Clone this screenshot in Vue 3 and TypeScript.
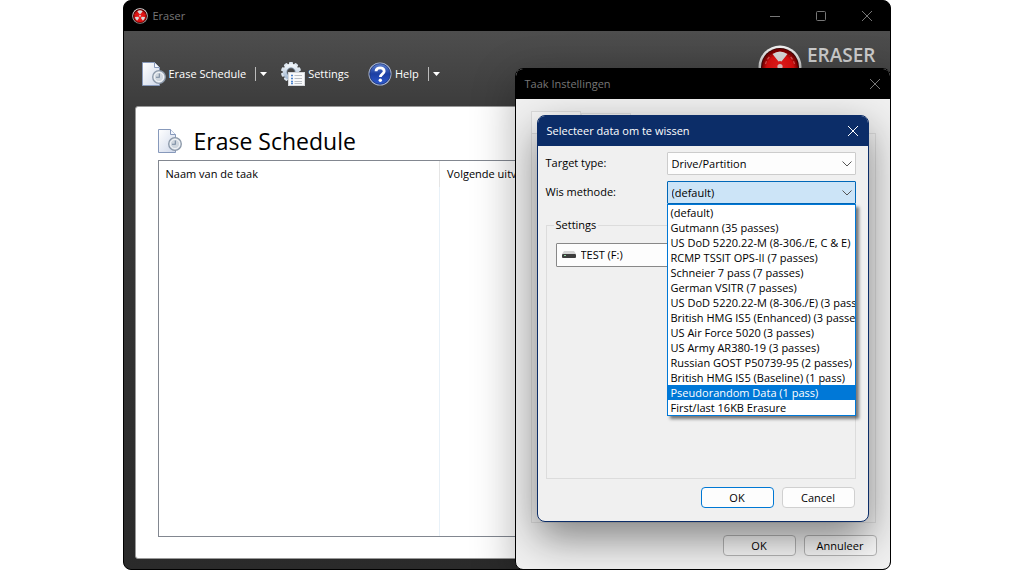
<script setup lang="ts">
import { ref } from 'vue'

const targetType = ref('Drive/Partition')
const method = ref('(default)')
const drive = ref('TEST (F:)')
const highlighted = ref('Pseudorandom Data (1 pass)')

const methods: string[] = [
  '(default)',
  'Gutmann (35 passes)',
  'US DoD 5220.22-M (8-306./E, C & E)',
  'RCMP TSSIT OPS-II (7 passes)',
  'Schneier 7 pass (7 passes)',
  'German VSITR (7 passes)',
  'US DoD 5220.22-M (8-306./E) (3 passes)',
  'British HMG IS5 (Enhanced) (3 passes)',
  'US Air Force 5020 (3 passes)',
  'US Army AR380-19 (3 passes)',
  'Russian GOST P50739-95 (2 passes)',
  'British HMG IS5 (Baseline) (1 pass)',
  'Pseudorandom Data (1 pass)',
  'First/last 16KB Erasure',
]
const teeth: number[] = [0, 36, 72, 108, 144, 180, 216, 252, 288, 324]
</script>

<template>
  <div class="desktop">
    <svg class="defs" width="0" height="0" aria-hidden="true">
      <defs>
        <linearGradient id="paper" x1="0" y1="0" x2="1" y2="1">
          <stop offset="0" stop-color="#ffffff" />
          <stop offset="1" stop-color="#cfd8ea" />
        </linearGradient>
        <linearGradient id="gearFill" x1="0" y1="0" x2="0" y2="1">
          <stop offset="0" stop-color="#eef3f8" />
          <stop offset="1" stop-color="#9fb6d0" />
        </linearGradient>
        <linearGradient id="helpFill" x1="0" y1="0" x2="0" y2="1">
          <stop offset="0" stop-color="#5f82d0" />
          <stop offset="0.5" stop-color="#1c3fa2" />
          <stop offset="1" stop-color="#2d5ad0" />
        </linearGradient>
        <linearGradient id="rim" x1="0" y1="0" x2="0" y2="1">
          <stop offset="0" stop-color="#f4f4f4" />
          <stop offset="1" stop-color="#8c8c8c" />
        </linearGradient>
        <radialGradient id="redFill" cx="0.5" cy="0.55" r="0.5">
          <stop offset="0" stop-color="#f02020" />
          <stop offset="0.75" stop-color="#dc1010" />
          <stop offset="1" stop-color="#7a0000" />
        </radialGradient>
        <symbol id="page-clock" viewBox="0 0 24 24">
          <path d="M0.5 0.5H12.5L17.5 5.5V23.5H0.5Z" fill="url(#paper)" stroke="#8799bb" />
          <path d="M12.5 0.5V5.5H17.5" fill="#f6f9ff" stroke="#8799bb" />
          <circle cx="17" cy="15" r="6.3" fill="#dfe4ea" stroke="#8b98a9" stroke-width="1.3" />
          <circle cx="17" cy="15" r="4.6" fill="#cfd6de" stroke="#f6f8fa" stroke-width="0.8" />
          <path d="M17.3 11.5V15.2H14" fill="none" stroke="#77889f" stroke-width="1.1" />
        </symbol>
        <symbol id="radiation" viewBox="0 0 44 44">
          <circle cx="22" cy="22" r="21.5" fill="url(#rim)" />
          <circle cx="22" cy="22" r="19" fill="#3c0505" />
          <circle cx="22" cy="22" r="18" fill="url(#redFill)" />
          <path d="M20.5 16.5L14.5 9Q22 4 29.5 9L23.5 16.5Q22 15.5 20.5 16.5Z" fill="#d8d8d8" />
          <path d="M27 24L36 25A15 15 0 0 1 30 35L24.5 27.5Z" fill="#d8d8d8" />
          <path d="M17 24L8 25A15 15 0 0 0 14 35L19.5 27.5Z" fill="#d8d8d8" />
          <circle cx="22" cy="21.5" r="2.6" fill="#e4c4c4" />
          <path d="M7.5 19A16 16 0 0 1 13 10.5M36.5 19A16 16 0 0 0 31 10.5" fill="none" stroke="#f48a8a" stroke-width="1.2" opacity="0.6" stroke-dasharray="3 2" />
        </symbol>
      </defs>
    </svg>

    <main class="window">
      <header class="titlebar">
        <svg class="app-icon" aria-hidden="true"><use href="#radiation" /></svg>
        <span class="title">Eraser</span>
        <button class="caption" aria-label="Minimize">
          <svg width="12" height="12"><path d="M1 6.5H11" /></svg>
        </button>
        <button class="caption" aria-label="Maximize">
          <svg width="12" height="12"><rect x="1.5" y="1.5" width="9" height="9" rx="1" /></svg>
        </button>
        <button class="caption" aria-label="Close">
          <svg width="12" height="12"><path d="M1 1L11 11M11 1L1 11" /></svg>
        </button>
      </header>

      <div class="body">
        <nav class="toolbar">
          <div class="tools">
            <button class="tool"><svg class="tool-icon" aria-hidden="true"><use href="#page-clock" /></svg>Erase Schedule</button>
            <button class="drop" aria-label="Erase Schedule menu"><svg width="7" height="4"><path d="M0 0H7L3.5 4Z" /></svg></button>
          </div>
          <div class="tools single">
            <button class="tool">
              <svg class="tool-icon" viewBox="0 0 24 24" aria-hidden="true">
                <rect v-for="a in teeth" :key="a" x="8" y="0" width="4" height="4" rx="1" fill="#d9e3ed" :transform="`rotate(${a} 10 10)`" />
                <circle cx="10" cy="10" r="6.2" fill="none" stroke="url(#gearFill)" stroke-width="4" />
                <circle cx="10" cy="10" r="4.2" fill="none" stroke="#8fa5bd" stroke-width="0.8" />
                <rect x="7.5" y="10.5" width="16" height="13" fill="#f8f9fa" stroke="#d3d6da" />
                <path d="M10 13.5H12M10 16.5H12M10 19.5H12M10 21.5H12" stroke="#4d83cb" stroke-width="1.4" />
                <path d="M13.5 13.5H21M13.5 16.5H21M13.5 19.5H21M13.5 21.5H21" stroke="#b9bec5" />
              </svg>Settings
            </button>
          </div>
          <div class="tools">
            <button class="tool">
              <svg class="tool-icon" viewBox="0 0 24 24" aria-hidden="true">
                <circle cx="12" cy="12" r="11.5" fill="#aebbd6" />
                <circle cx="12" cy="12" r="10.3" fill="url(#helpFill)" stroke="#193277" stroke-width="0.8" />
                <path d="M8 9.2C8 4.8 16.2 4.8 16.2 9.2C16.2 12 12.3 12.2 12.3 15" fill="none" stroke="#fff" stroke-width="2.8" />
                <circle cx="12.3" cy="18.2" r="1.7" fill="#fff" />
              </svg>Help
            </button>
            <button class="drop" aria-label="Help menu"><svg width="7" height="4"><path d="M0 0H7L3.5 4Z" /></svg></button>
          </div>
          <div class="brand">
            <svg class="brand-icon" aria-hidden="true"><use href="#radiation" /></svg>
            <div class="brand-text"><strong>ERASER</strong><small>6.2</small></div>
          </div>
        </nav>

        <section class="panel">
          <h1><svg class="tool-icon" aria-hidden="true"><use href="#page-clock" /></svg>Erase Schedule</h1>
          <div class="list">
            <table>
              <thead>
                <tr><th scope="col">Naam van de taak</th><th scope="col">Volgende uitvoering</th></tr>
              </thead>
              <tbody>
                <tr><td></td><td></td></tr>
              </tbody>
            </table>
          </div>
        </section>
      </div>

      <section class="task-dialog" role="dialog" aria-labelledby="task-title">
        <header class="titlebar">
          <span id="task-title" class="title">Taak Instellingen</span>
          <button class="caption narrow" aria-label="Close">
            <svg width="12" height="12"><path d="M1 1L11 11M11 1L1 11" /></svg>
          </button>
        </header>
        <div class="task-body">
          <div class="tabs"><span class="tab active"></span><span class="tab"></span></div>
          <div class="tab-page"></div>
          <footer class="actions">
            <button class="btn">OK</button>
            <button class="btn">Annuleer</button>
          </footer>
        </div>

        <form class="data-dialog" role="dialog" aria-labelledby="data-title" @submit.prevent>
          <header class="titlebar">
            <span id="data-title" class="title">Selecteer data om te wissen</span>
            <button type="button" class="caption narrow" aria-label="Close">
              <svg width="12" height="12"><path d="M1 1L11 11M11 1L1 11" /></svg>
            </button>
          </header>
          <div class="data-body">
            <div class="field">
              <label for="target">Target type:</label>
              <div class="combo">
                <select id="target" v-model="targetType"><option>Drive/Partition</option></select>
                <svg class="chevron" width="10" height="6"><path d="M0.5 0.5L5 5L9.5 0.5" /></svg>
              </div>
            </div>
            <div class="field">
              <label for="method">Wis methode:</label>
              <div class="combo open">
                <select id="method" v-model="method"><option v-for="m in methods" :key="m">{{ m }}</option></select>
                <svg class="chevron" width="10" height="6"><path d="M0.5 0.5L5 5L9.5 0.5" /></svg>
                <ul class="menu" role="listbox" aria-label="Wis methode">
                  <li v-for="m in methods" :key="m" role="option" :aria-selected="m === highlighted" :class="{ active: m === highlighted }" @mouseenter="highlighted = m">{{ m }}</li>
                </ul>
              </div>
            </div>
            <fieldset>
              <legend>Settings</legend>
              <div class="combo drive">
                <svg class="drive-icon" width="14" height="7" aria-hidden="true">
                  <path d="M2 0H12L14 3H0Z" fill="#d4d4d4" />
                  <rect y="3" width="14" height="4" rx="1" fill="#3d3d3d" />
                  <rect x="2" y="4" width="2" height="1" fill="#8fd8a0" />
                </svg>
                <select v-model="drive" aria-label="Drive"><option>TEST (F:)</option></select>
              </div>
            </fieldset>
            <footer class="actions">
              <button type="submit" class="btn primary">OK</button>
              <button type="button" class="btn">Cancel</button>
            </footer>
          </div>
        </form>
      </section>
    </main>
  </div>
</template>

<style>
body {
  margin: 0;
  background: #fff;
}
</style>

<style scoped>
* {
  box-sizing: border-box;
}
.desktop {
  display: flex;
  justify-content: center;
  min-height: 100vh;
  font: 11px/16px 'Open Sans', 'Noto Sans', sans-serif;
  color: #000;
}
.defs {
  position: absolute;
}
button,
select {
  font: inherit;
  color: inherit;
}
.window {
  position: relative;
  display: flex;
  flex-direction: column;
  width: 76%;
  max-width: 768px;
  border: 1px solid #000;
  border-radius: 8px;
  background: #000;
  overflow: hidden;
}
.titlebar {
  display: flex;
  align-items: center;
  flex: none;
  height: 30px;
  padding-left: 9px;
  background: #000;
  color: #777;
}
.window > .titlebar {
  padding-left: 8px;
}
.title {
  flex: 1;
}
.app-icon {
  width: 16px;
  height: 16px;
  margin-right: 5px;
}
.caption {
  display: flex;
  align-items: center;
  justify-content: center;
  width: 46px;
  height: 100%;
  padding: 0;
  border: 0;
  background: none;
}
.caption.narrow {
  width: 30px;
}
.caption svg {
  fill: none;
  stroke: currentColor;
}
.body {
  display: flex;
  flex-direction: column;
  flex: 1;
  padding: 0 11px 10px;
  background: linear-gradient(#4e4e4e 0, #3b3b3b 80px, #333 50%, #2a2a2a 100%);
}
.toolbar {
  display: flex;
  align-items: flex-start;
  height: 75px;
  padding: 31px 3px 0 7px;
  color: #fff;
}
.tools {
  display: flex;
  align-items: center;
  height: 24px;
  margin-right: 14px;
}
.tools.single {
  margin-right: 19px;
}
.tool {
  display: flex;
  align-items: center;
  gap: 3px;
  padding: 0;
  border: 0;
  background: none;
}
.tool-icon {
  width: 24px;
  height: 24px;
}
.drop {
  display: flex;
  align-items: center;
  height: 14px;
  margin-left: 9px;
  padding: 0 0 0 4px;
  border: 0;
  border-left: 1px solid #bbb;
  background: none;
}
.drop svg {
  fill: #fff;
}
.brand {
  display: flex;
  gap: 5px;
  margin: -17px 0 0 auto;
}
.brand-icon {
  width: 44px;
  height: 44px;
}
.brand-text {
  display: flex;
  flex-direction: column;
  align-items: center;
  color: #ccc;
}
.brand-text strong {
  font: 600 19px/21px 'Open Sans', sans-serif;
}
.brand-text small {
  font-size: 11px;
  line-height: 11px;
}
.panel {
  display: flex;
  flex-direction: column;
  flex: 1;
  padding: 18px 22px 21px;
  border: 1px solid #999;
  border-radius: 3px;
  background: #fff;
}
h1 {
  display: flex;
  align-items: center;
  gap: 12px;
  height: 32px;
  margin: 0 0 3px;
  font-size: 23px;
  font-weight: 400;
}
.list {
  display: flex;
  flex: 1;
  border: 1px solid #828790;
}
table {
  width: 100%;
  border-collapse: collapse;
  table-layout: fixed;
}
th {
  height: 26px;
  padding: 0 7px;
  border-right: 1px solid #e5e5e5;
  font-weight: 400;
  text-align: left;
}
th:first-child {
  width: 281px;
}
td {
  border-right: 1px solid #e8f1f8;
}
.task-dialog {
  position: absolute;
  right: -1px;
  bottom: -1px;
  display: flex;
  flex-direction: column;
  width: 376px;
  height: 502px;
  border: 1px solid #000;
  border-radius: 8px;
  background: #f0f0f0;
  box-shadow: 0 12px 44px rgba(0, 0, 0, 0.3);
  overflow: hidden;
}
.task-body {
  display: flex;
  flex-direction: column;
  flex: 1;
  padding: 12px 13px 13px 15px;
}
.tabs {
  display: flex;
  align-items: flex-end;
  height: 22px;
}
.tab {
  width: 50px;
  height: 20px;
  border: 1px solid #dcdcdc;
  border-bottom: 0;
}
.tab.active {
  height: 22px;
  background: #f6f6f6;
}
.tab-page {
  flex: 1;
  margin-right: 1px;
  border: 1px solid #dcdcdc;
}
.actions {
  display: flex;
  justify-content: flex-end;
  gap: 8px;
}
.task-body .actions {
  margin-top: 12px;
}
.btn {
  width: 73px;
  height: 21px;
  padding: 0;
  border: 1px solid #d0d0d0;
  border-radius: 4px;
  background: #fdfdfd;
}
.task-body .btn {
  background: rgba(255, 255, 255, 0.5);
  border-color: #b4b4b4;
}
.btn.primary {
  border-color: #0078d4;
}
.data-dialog {
  position: absolute;
  top: 46px;
  left: 21px;
  display: flex;
  flex-direction: column;
  width: 332px;
  height: 407px;
  border: 1px solid #0c2d68;
  border-radius: 8px;
  background: #f0f0f0;
  box-shadow: 0 16px 40px rgba(0, 0, 0, 0.46);
}
.data-dialog .titlebar {
  border-radius: 7px 7px 0 0;
  background: #0c2d68;
  color: #fff;
}
.data-body {
  display: flex;
  flex-direction: column;
  flex: 1;
  padding: 6px 12px 13px 8px;
}
.data-body .actions {
  padding-right: 1px;
}
.field {
  display: flex;
  margin-bottom: 6px;
}
.field label {
  width: 121px;
  padding-top: 3px;
}
.combo {
  position: relative;
  flex: 1;
  height: 23px;
}
.combo select {
  width: 100%;
  height: 100%;
  padding: 0 4px;
  border: 1px solid #ccc;
  border-radius: 1px;
  background: #fdfdfd;
  appearance: none;
}
.combo.open select {
  border-color: #0067b8;
  background: #cce4f7;
}
.chevron {
  position: absolute;
  top: 9px;
  right: 4px;
  fill: none;
  stroke: #555;
  pointer-events: none;
}
.menu {
  position: absolute;
  top: 100%;
  left: 0;
  z-index: 2;
  width: 100%;
  margin: 0;
  padding: 0;
  border: 1px solid #0078d7;
  background: #fff;
  box-shadow: 3px 3px 3px rgba(0, 0, 0, 0.5);
  list-style: none;
}
.menu li {
  height: 15px;
  padding-left: 3px;
  line-height: 15px;
  white-space: nowrap;
  overflow: hidden;
}
.menu .active {
  background: #0078d7;
  color: #fff;
}
fieldset {
  flex: 1;
  min-width: 0;
  margin: 7px 0 8px;
  padding: 10px 9px 0;
  border: 1px solid #dcdcdc;
}
legend {
  margin-left: -2px;
  padding: 0 2px;
}
.combo.drive select {
  height: 24px;
  padding-left: 24px;
  border-color: #888;
}
.drive-icon {
  position: absolute;
  top: 8px;
  left: 6px;
  pointer-events: none;
}
</style>
